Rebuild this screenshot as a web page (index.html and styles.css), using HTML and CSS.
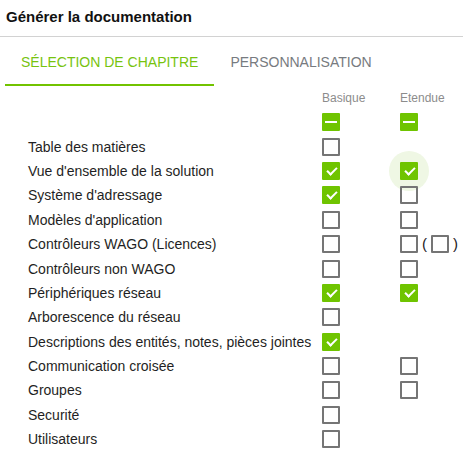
FILE: index.html
```html
<!DOCTYPE html>
<html lang="fr">
<head>
<meta charset="utf-8">
<title>Générer la documentation</title>
<link rel="stylesheet" href="styles.css">
</head>
<body>
<div class="dialog">
  <div class="header">Générer la documentation</div>
  <div class="tabs">
    <div class="tab active">Sélection de chapitre</div>
    <div class="tab">Personnalisation</div>
  </div>
  <div class="grid">
    <div></div><div class="colhead">Basique</div><div class="colhead">Etendue</div>

    <div></div><div class="cell"><span class="cb mixed"></span></div><div class="cell"><span class="cb mixed"></span></div>

    <div class="label">Table des matières</div><div class="cell"><span class="cb"></span></div><div></div>

    <div class="label">Vue d'ensemble de la solution</div><div class="cell"><span class="cb checked"></span></div><div class="cell"><span class="focus-wrap"><span class="ripple"></span><span class="cb checked"></span></span></div>

    <div class="label">Système d'adressage</div><div class="cell"><span class="cb checked"></span></div><div class="cell"><span class="cb"></span></div>

    <div class="label">Modèles d'application</div><div class="cell"><span class="cb"></span></div><div class="cell"><span class="cb"></span></div>

    <div class="label">Contrôleurs WAGO (Licences)</div><div class="cell"><span class="cb"></span></div><div class="cell"><span class="cb"></span><span class="paren open">(</span><span class="cb"></span><span class="paren close">)</span></div>

    <div class="label">Contrôleurs non WAGO</div><div class="cell"><span class="cb"></span></div><div class="cell"><span class="cb"></span></div>

    <div class="label">Périphériques réseau</div><div class="cell"><span class="cb checked"></span></div><div class="cell"><span class="cb checked"></span></div>

    <div class="label">Arborescence du réseau</div><div class="cell"><span class="cb"></span></div><div></div>

    <div class="label">Descriptions des entités, notes, pièces jointes</div><div class="cell"><span class="cb checked"></span></div><div></div>

    <div class="label">Communication croisée</div><div class="cell"><span class="cb"></span></div><div class="cell"><span class="cb"></span></div>

    <div class="label">Groupes</div><div class="cell"><span class="cb"></span></div><div class="cell"><span class="cb"></span></div>

    <div class="label">Securité</div><div class="cell"><span class="cb"></span></div><div></div>

    <div class="label">Utilisateurs</div><div class="cell"><span class="cb"></span></div><div></div>
  </div>
</div>
</body>
</html>
```

FILE: styles.css
```css
html, body {
  margin: 0;
  padding: 0;
  background: #ffffff;
}

body {
  font-family: "Liberation Sans", Arial, sans-serif;
  color: #222;
}

.dialog {
  width: 463px;
}

.header {
  padding: 7px 0 9px 6px;
  line-height: 20px;
  font-size: 15px;
  font-weight: bold;
  color: #111;
  border-bottom: 1px solid #d2d2d2;
}

.tabs {
  display: flex;
  padding-left: 5px;
}

.tab {
  padding: 15px 16px 12px 16px;
  line-height: 20px;
  font-size: 14px;
  text-transform: uppercase;
  color: #777b80;
  border-bottom: 2px solid transparent;
}

.tab.active {
  color: #77c30f;
  border-bottom-color: #72c300;
}

.grid {
  display: grid;
  grid-template-columns: 294px 78px 1fr;
  grid-template-rows: 24px;
  grid-auto-rows: 24.4px;
  padding-left: 28px;
}

.colhead {
  font-size: 12px;
  color: #8c8c8c;
  line-height: 24px;
}

.label {
  font-size: 14px;
  line-height: 24px;
  color: #1f1f24;
  white-space: nowrap;
  display: flex;
  align-items: center;
}

.cell {
  display: flex;
  align-items: center;
}

.cb {
  display: inline-block;
  box-sizing: border-box;
  width: 18px;
  height: 18px;
  border: 2px solid #757575;
  border-radius: 1px;
  position: relative;
  flex: none;
}

.cb.checked,
.cb.mixed {
  background: #6fc400;
  border-color: #6fc400;
}

.cb.checked::after {
  content: "";
  position: absolute;
  left: 5px;
  top: 1px;
  width: 4px;
  height: 8px;
  border-right: 2px solid #fff;
  border-bottom: 2px solid #fff;
  transform: rotate(45deg);
  transform-origin: center;
}

.cb.mixed::after {
  content: "";
  position: absolute;
  left: 1px;
  right: 1px;
  top: 6px;
  height: 2px;
  background: #fff;
}

.focus-wrap {
  position: relative;
  display: inline-flex;
}

.ripple {
  position: absolute;
  left: -11px;
  top: -11px;
  width: 40px;
  height: 40px;
  border-radius: 50%;
  background: #eff7e4;
}

.paren {
  font-size: 15px;
  line-height: 18px;
  color: #222;
}

.paren.open {
  margin: 0 4px 0 4px;
}

.paren.close {
  margin-left: 4px;
}
```
